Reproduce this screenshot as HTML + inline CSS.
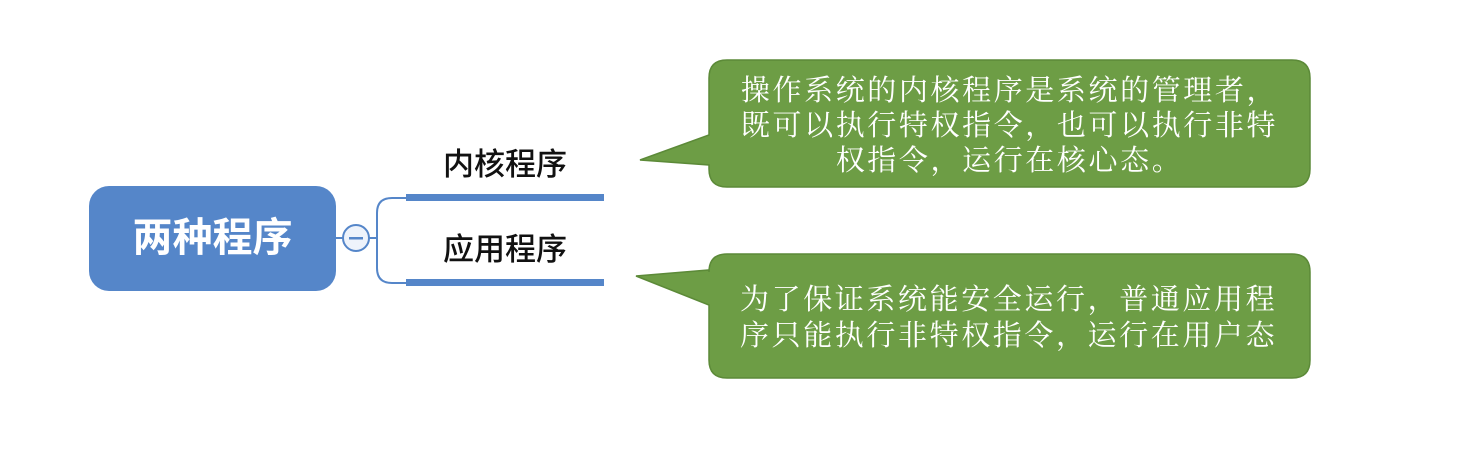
<!DOCTYPE html>
<html><head><meta charset="utf-8"><style>
body{margin:0;width:1469px;height:452px;background:#fff;position:relative;overflow:hidden;font-family:"Liberation Sans","Noto Sans CJK SC",sans-serif}
.c{position:absolute;left:89px;top:186px;width:247px;height:105px;background:#5586c9;border-radius:20px;color:#fff;font-weight:bold;font-size:40px;line-height:105px;text-align:center}
.l{position:absolute;font-size:31px;color:#111;font-weight:500;line-height:40px}
.t{position:absolute;color:#fff;font-family:"Liberation Serif","Noto Serif CJK SC",serif;font-size:29px;letter-spacing:2.6px;line-height:36px}
</style></head><body>
<svg width="1469" height="452" style="position:absolute;left:0;top:0">
<path d="M336 238 H343" stroke="#5586c9" stroke-width="2"/>
<circle cx="356" cy="238" r="13" fill="#eef3fb" stroke="#5586c9" stroke-width="2"/>
<rect x="349" y="237" width="14" height="2.5" fill="#5586c9"/>
<path d="M369 238 H377 M392 198 Q377 198 377 213 V268 Q377 283 392 283 H406 M392 198 H406" stroke="#5586c9" stroke-width="2" fill="none"/>
<rect x="406" y="194" width="198" height="7" fill="#5586c9"/>
<rect x="406" y="279" width="198" height="7" fill="#5586c9"/>
<path d="M727 60 H1292 Q1310 60 1310 78 V169 Q1310 187 1292 187 H727 Q709 187 709 169 V165 L640 160 L709 135 V78 Q709 60 727 60Z" fill="#6d9d45" stroke="#5c8a38" stroke-width="1.5"/>
<path d="M727 254 H1292 Q1310 254 1310 272 V360 Q1310 378 1292 378 H727 Q709 378 709 360 V305 L636 276 L709 270 V272 Q709 254 727 254Z" fill="#6d9d45" stroke="#5c8a38" stroke-width="1.5"/>
</svg>
<div class="c">两种程序</div>
<div class="l" style="left:443px;top:145px">内核程序</div>
<div class="l" style="left:443px;top:230px">应用程序</div>
<div class="t" style="left:709px;top:74px;width:601px;text-align:center;line-height:35px">操作系统的内核程序是系统的管理者，<br>既可以执行特权指令，也可以执行非特<br>权指令，运行在核心态。</div>
<div class="t" style="left:740px;top:282px;width:570px">为了保证系统能安全运行，普通应用程<br>序只能执行非特权指令，运行在用户态</div>
</body></html>
